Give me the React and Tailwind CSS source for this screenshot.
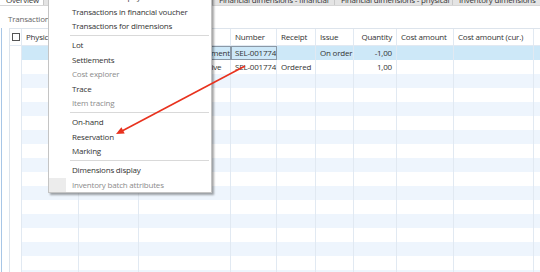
import React from 'react';

// Column layout of the transactions grid (widths in px, after the checkbox column)
const columns = [
  { key: 'physical', label: 'Physical date', width: 57 },
  { key: 'c2', label: '', width: 60 },
  { key: 'reference', label: 'Reference', width: 92 },
  { key: 'number', label: 'Number', width: 46 },
  { key: 'receipt', label: 'Receipt', width: 39 },
  { key: 'issue', label: 'Issue', width: 38 },
  { key: 'quantity', label: 'Quantity', width: 43, right: true },
  { key: 'cost', label: 'Cost amount', width: 57 },
  { key: 'costCur', label: 'Cost amount (cur.)', width: 80 },
  { key: 'rest', label: '', width: 40 },
];

const rows = [
  { reference: 'Transfer order shipment', number: 'SEL-001774', issue: 'On order', quantity: '-1,00', selected: true },
  { reference: 'Transfer order receive', number: 'SEL-001774', receipt: 'Ordered', quantity: '1,00' },
];

const menuItems = [
  { label: 'Transactions in physical voucher' },
  { label: 'Transactions in financial voucher' },
  { label: 'Transactions for dimensions' },
  { sep: true },
  { label: 'Lot' },
  { label: 'Settlements' },
  { label: 'Cost explorer', disabled: true },
  { label: 'Trace' },
  { label: 'Item tracing', disabled: true },
  { sep: true },
  { label: 'On-hand' },
  { label: 'Reservation' },
  { label: 'Marking' },
  { sep: true },
  { label: 'Dimensions display' },
  { label: 'Inventory batch attributes', disabled: true },
];

const tabs = [
  { label: 'Overview', width: 44, active: true },
  { label: 'General', width: 60 },
  { label: 'Update', width: 60 },
  { label: 'Details', width: 49 },
  { label: 'Financial dimensions - financial', width: 122 },
  { label: 'Financial dimensions - physical', width: 118 },
  { label: 'Inventory dimensions', width: 90 },
];

function Cell({ col, children, bordered }) {
  return (
    <div
      className={`shrink-0 h-full border-r border-[#e1e9f2] px-[4px] flex items-center overflow-hidden whitespace-nowrap ${
        col.right ? 'justify-end' : ''
      } ${bordered ? 'outline outline-1 outline-[#8a98a6] -outline-offset-1' : ''}`}
      style={{ width: col.width }}
    >
      {children}
    </div>
  );
}

export default function App() {
  const emptyRows = Array.from({ length: 16 });

  return (
    <div className="relative w-[540px] h-[272px] overflow-hidden bg-white text-[8px] tracking-[-0.2px] text-[#333] font-['Open_Sans',sans-serif]">
      {/* tab strip, cut off at the top */}
      <div className="flex h-[6px] bg-[#e4e4e4] overflow-hidden border-b border-[#d6d6d6]">
        {tabs.map((t) => (
          <div
            key={t.label}
            className={`shrink-0 h-[12px] -mt-[6px] px-[6px] leading-[12px] whitespace-nowrap border-r border-[#c8c8c8] ${
              t.active ? 'bg-white' : 'bg-[#e4e4e4]'
            }`}
            style={{ width: t.width }}
          >
            {t.label}
          </div>
        ))}
      </div>

      <div className="pl-[8px] pt-[8px] h-[22px] text-[#666] leading-[10px]">Transactions</div>

      <div className="flex">
        {/* page frame line on the far left */}
        <div className="w-[2px] ml-[1px] border-l border-[#a8c6e6] h-[245px]" />
        <div className="ml-[7px] flex-1 border-l border-t border-[#dde4ec]">
          {/* header */}
          <div className="flex h-[17px] border-b border-[#e1e9f2]">
            <div className="w-[12px] shrink-0 flex items-center justify-center border-r border-[#e1e9f2]">
              <div className="w-[8px] h-[8px] border border-[#555] bg-white" />
            </div>
            {columns.map((c) => (
              <Cell key={c.key} col={c}>
                {c.label}
              </Cell>
            ))}
          </div>
          {/* data rows */}
          {rows.map((r, i) => (
            <div key={i} className="flex h-[14px]">
              <div className="w-[12px] shrink-0 bg-white border-r border-[#e1e9f2]" />
              <div className={`flex flex-1 ${r.selected ? 'bg-[#cde8f8]' : 'bg-white'}`}>
                {columns.map((c) => (
                  <Cell key={c.key} col={c} bordered={r.selected && (c.key === 'reference' || c.key === 'number')}>
                    {r[c.key] || ''}
                  </Cell>
                ))}
              </div>
            </div>
          ))}
          {emptyRows.map((_, i) => (
            <div key={i} className="flex h-[14px]">
              <div className="w-[12px] shrink-0 bg-white border-r border-[#e1e9f2]" />
              <div className={`flex flex-1 ${i % 2 === 0 ? 'bg-[#eef5fd]' : 'bg-white'}`}>
                {columns.map((c) => (
                  <Cell key={c.key} col={c} />
                ))}
              </div>
            </div>
          ))}
        </div>
      </div>

      {/* context menu lying over the grid */}
      <div className="absolute left-[48px] top-[-11px] w-[164px] bg-white border border-[#c4c4c4] shadow-[2px_2px_2px_rgba(0,0,0,0.35)]">
        {menuItems.map((m, i) =>
          m.sep ? (
            <div key={i} className="h-[4.5px] flex items-center pl-[21px] pr-[2px]">
              <div className="h-px w-full bg-[#d9d9d9]" />
            </div>
          ) : (
            <div
              key={i}
              className={`h-[14.5px] flex items-center pl-[23px] whitespace-nowrap ${
                m.disabled ? 'text-[#8c8c8c]' : 'text-[#333]'
              } ${i === menuItems.length - 1 ? 'bg-[linear-gradient(to_right,#ececec_17px,transparent_17px)]' : ''}`}
            >
              {m.label}
            </div>
          )
        )}
      </div>

      {/* red annotation arrow */}
      <svg className="absolute left-0 top-0 pointer-events-none" width="540" height="272">
        <line x1="245" y1="66" x2="122" y2="131" stroke="#e8321e" strokeWidth="1.6" />
        <polygon points="116,134 124.7,133.4 121.4,127.2" fill="#e8321e" />
      </svg>
    </div>
  );
}
